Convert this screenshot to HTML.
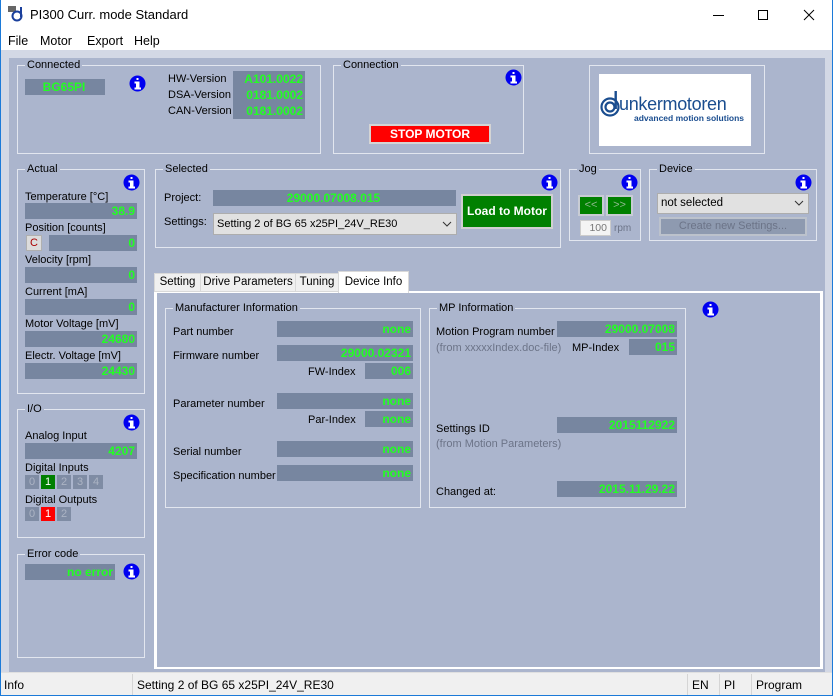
<!DOCTYPE html>
<html><head><meta charset="utf-8">
<style>
*{margin:0;padding:0;box-sizing:border-box}
body{width:833px;height:696px;overflow:hidden;background:#fff;font-family:"Liberation Sans",sans-serif;font-size:11px;color:#000;position:relative}
.a{position:absolute}
.lbl{position:absolute;font-size:11px;white-space:nowrap;line-height:14px}
.grp{position:absolute;border:1px solid #e2e6ef}
.gt{position:absolute;top:-8px;left:7px;background:#abb5cd;padding:0 2px;font-size:11px;line-height:14px;white-space:nowrap}
.f{position:absolute;background:#7786a0;color:#22ff22;font-weight:bold;font-size:12px;text-align:right;padding-right:2px;line-height:16px;white-space:nowrap;overflow:hidden}
.ic{position:absolute;width:17px;height:17px}
.box{position:absolute;width:14px;height:14px;background:#7f8ca4;color:#acb4c4;font-size:11px;text-align:center;line-height:14px}
.tab{position:absolute;top:273px;height:19px;background:#f0f0f0;border:1px solid #d9d9d9;font-size:11.5px;line-height:17px;text-align:center}
.gray{color:#6c7488}
</style></head><body>
<div class="a" style="left:0;top:0;width:1px;height:696px;background:#1c7ad8"></div>
<div class="a" style="left:832px;top:0;width:1px;height:696px;background:#1c7ad8"></div>
<svg class="a" style="left:8px;top:6px" width="16" height="16" viewBox="0 0 16 16"><rect x="0" y="0" width="8" height="6" fill="#666"/><circle cx="9" cy="10" r="4.5" fill="none" stroke="#1a3f9c" stroke-width="2"/><rect x="12" y="1" width="2" height="10" fill="#1a3f9c"/></svg>
<div class="lbl" style="left:30px;top:8px;font-size:13px">PI300 Curr. mode Standard</div>
<svg class="a" style="left:700px;top:0" width="133" height="30"><line x1="13" y1="15.5" x2="24" y2="15.5" stroke="#000"/><rect x="58.5" y="10.5" width="9" height="9" fill="none" stroke="#000"/><path d="M104 10 L114 20 M114 10 L104 20" stroke="#000"/></svg>
<div class="lbl" style="left:8px;top:34px;font-size:12.5px">File</div>
<div class="lbl" style="left:40px;top:34px;font-size:12.5px">Motor</div>
<div class="lbl" style="left:87px;top:34px;font-size:12.5px">Export</div>
<div class="lbl" style="left:134px;top:34px;font-size:12.5px">Help</div>
<div class="a" style="left:1px;top:50px;width:831px;height:622px;background:#d3d8e5"></div>
<div class="a" style="left:9px;top:58px;width:816px;height:614px;background:#abb5cd"></div>

<div class="grp" style="left:17px;top:65px;width:304px;height:89px"><div class="gt">Connected</div></div>
<div class="f" style="left:25px;top:79px;width:80px;text-align:center">BG65PI</div>
<svg class="ic" style="left:129px;top:75px" viewBox="0 0 17 17"><circle cx="8.5" cy="8.5" r="8" fill="#0000f0"/><rect x="7.5" y="3" width="2" height="2" fill="#fff"/><path d="M5.5 6.5h5v6h1.5v2h-6.5v-2h1.5v-4h-1.5z" fill="#fff"/></svg>
<div class="lbl" style="left:168px;top:72px">HW-Version</div>
<div class="lbl" style="left:168px;top:88px">DSA-Version</div>
<div class="lbl" style="left:168px;top:104px">CAN-Version</div>
<div class="f" style="left:233px;top:71px;width:72px">A101.0022</div>
<div class="f" style="left:233px;top:87px;width:72px">0181.0002</div>
<div class="f" style="left:233px;top:103px;width:72px">0181.0002</div>

<div class="grp" style="left:333px;top:65px;width:191px;height:89px"><div class="gt">Connection</div></div>
<svg class="ic" style="left:505px;top:69px" viewBox="0 0 17 17"><circle cx="8.5" cy="8.5" r="8" fill="#0000f0"/><rect x="7.5" y="3" width="2" height="2" fill="#fff"/><path d="M5.5 6.5h5v6h1.5v2h-6.5v-2h1.5v-4h-1.5z" fill="#fff"/></svg>
<div class="a" style="left:369px;top:124px;width:122px;height:20px;border:2px solid #d4d4d4;background:#ff0000;color:#fff;font-weight:bold;font-size:12px;text-align:center;line-height:16px">STOP MOTOR</div>

<div class="grp" style="left:589px;top:65px;width:176px;height:89px"></div>
<div class="a" style="left:599px;top:74px;width:152px;height:72px;background:#fff"></div>
<svg class="a" style="left:600px;top:90px" width="22" height="30" viewBox="0 0 22 30"><circle cx="10" cy="17" r="8.5" fill="none" stroke="#1a4d8f" stroke-width="2.2"/><circle cx="10" cy="17" r="4.5" fill="none" stroke="#1a4d8f" stroke-width="2.2"/><rect x="14.5" y="1" width="2.4" height="18" fill="#1a4d8f"/></svg>
<div class="lbl" style="left:619px;top:94px;font-size:18px;line-height:20px;color:#1a4d8f;letter-spacing:-0.3px">unkermotoren</div>
<div class="lbl" style="left:634px;top:113px;font-size:8.5px;line-height:10px;font-weight:bold;color:#1a4d8f">advanced motion solutions</div>

<div class="grp" style="left:17px;top:169px;width:128px;height:225px"><div class="gt">Actual</div></div>
<svg class="ic" style="left:123px;top:174px" viewBox="0 0 17 17"><circle cx="8.5" cy="8.5" r="8" fill="#0000f0"/><rect x="7.5" y="3" width="2" height="2" fill="#fff"/><path d="M5.5 6.5h5v6h1.5v2h-6.5v-2h1.5v-4h-1.5z" fill="#fff"/></svg>
<div class="lbl" style="left:25px;top:190px">Temperature [°C]</div>
<div class="f" style="left:25px;top:203px;width:112px">38.9</div>
<div class="lbl" style="left:25px;top:221px">Position [counts]</div>
<div class="a" style="left:26px;top:235px;width:16px;height:16px;background:#dcdcdc;border:1px solid #b0b0b0;color:#a00;text-align:center;font-size:11px;line-height:14px">C</div>
<div class="f" style="left:49px;top:235px;width:88px">0</div>
<div class="lbl" style="left:25px;top:253px">Velocity [rpm]</div>
<div class="f" style="left:25px;top:267px;width:112px">0</div>
<div class="lbl" style="left:25px;top:285px">Current [mA]</div>
<div class="f" style="left:25px;top:299px;width:112px">0</div>
<div class="lbl" style="left:25px;top:317px">Motor Voltage [mV]</div>
<div class="f" style="left:25px;top:331px;width:112px">24680</div>
<div class="lbl" style="left:25px;top:349px">Electr. Voltage [mV]</div>
<div class="f" style="left:25px;top:363px;width:112px">24430</div>

<div class="grp" style="left:17px;top:409px;width:128px;height:129px"><div class="gt">I/O</div></div>
<svg class="ic" style="left:123px;top:414px" viewBox="0 0 17 17"><circle cx="8.5" cy="8.5" r="8" fill="#0000f0"/><rect x="7.5" y="3" width="2" height="2" fill="#fff"/><path d="M5.5 6.5h5v6h1.5v2h-6.5v-2h1.5v-4h-1.5z" fill="#fff"/></svg>
<div class="lbl" style="left:25px;top:429px">Analog Input</div>
<div class="f" style="left:25px;top:443px;width:112px">4207</div>
<div class="lbl" style="left:25px;top:461px">Digital Inputs</div>
<div class="box" style="left:25px;top:475px">0</div>
<div class="box" style="left:41px;top:475px;background:#007f00;color:#fff">1</div>
<div class="box" style="left:57px;top:475px">2</div>
<div class="box" style="left:73px;top:475px">3</div>
<div class="box" style="left:89px;top:475px">4</div>
<div class="lbl" style="left:25px;top:493px">Digital Outputs</div>
<div class="box" style="left:25px;top:507px">0</div>
<div class="box" style="left:41px;top:507px;background:#ff0000;color:#fff">1</div>
<div class="box" style="left:57px;top:507px">2</div>

<div class="grp" style="left:17px;top:554px;width:128px;height:104px"><div class="gt">Error code</div></div>
<div class="f" style="left:25px;top:564px;width:90px">no error</div>
<svg class="ic" style="left:123px;top:563px" viewBox="0 0 17 17"><circle cx="8.5" cy="8.5" r="8" fill="#0000f0"/><rect x="7.5" y="3" width="2" height="2" fill="#fff"/><path d="M5.5 6.5h5v6h1.5v2h-6.5v-2h1.5v-4h-1.5z" fill="#fff"/></svg>

<div class="grp" style="left:155px;top:169px;width:406px;height:79px"><div class="gt">Selected</div></div>
<svg class="ic" style="left:541px;top:174px" viewBox="0 0 17 17"><circle cx="8.5" cy="8.5" r="8" fill="#0000f0"/><rect x="7.5" y="3" width="2" height="2" fill="#fff"/><path d="M5.5 6.5h5v6h1.5v2h-6.5v-2h1.5v-4h-1.5z" fill="#fff"/></svg>
<div class="lbl" style="left:164px;top:191px">Project:</div>
<div class="f" style="left:213px;top:190px;width:243px;text-align:center">29000.07008.015</div>
<div class="lbl" style="left:164px;top:215px">Settings:</div>
<div class="a" style="left:213px;top:213px;width:244px;height:22px;background:#e1e1e1;border:1px solid #adadad;font-size:11px;line-height:20px;padding-left:3px">Setting 2 of BG 65 x25PI_24V_RE30</div>
<svg class="a" style="left:442px;top:220px" width="10" height="8"><path d="M1 2 L5 6 L9 2" fill="none" stroke="#333"/></svg>
<div class="a" style="left:461px;top:194px;width:92px;height:35px;border:2px solid #d0d0d0;background:#008000;color:#fff;font-weight:bold;font-size:12px;text-align:center;line-height:31px">Load to Motor</div>

<div class="grp" style="left:569px;top:169px;width:72px;height:72px"><div class="gt">Jog</div></div>
<svg class="ic" style="left:621px;top:174px" viewBox="0 0 17 17"><circle cx="8.5" cy="8.5" r="8" fill="#0000f0"/><rect x="7.5" y="3" width="2" height="2" fill="#fff"/><path d="M5.5 6.5h5v6h1.5v2h-6.5v-2h1.5v-4h-1.5z" fill="#fff"/></svg>
<div class="a" style="left:578px;top:195px;width:26px;height:21px;border:2px solid #c8ccd4;background:#008000;color:#8fb88f;text-align:center;line-height:17px;font-size:11px">&lt;&lt;</div>
<div class="a" style="left:606px;top:195px;width:27px;height:21px;border:2px solid #c8ccd4;background:#008000;color:#8fb88f;text-align:center;line-height:17px;font-size:11px">&gt;&gt;</div>
<div class="a" style="left:580px;top:220px;width:31px;height:16px;background:#f4f4f4;border:1px solid #ccc;color:#777;font-size:10.5px;text-align:right;padding-right:3px;line-height:14px">100</div>
<div class="lbl gray" style="left:614px;top:222px;font-size:10px">rpm</div>

<div class="grp" style="left:649px;top:169px;width:168px;height:72px"><div class="gt">Device</div></div>
<svg class="ic" style="left:795px;top:174px" viewBox="0 0 17 17"><circle cx="8.5" cy="8.5" r="8" fill="#0000f0"/><rect x="7.5" y="3" width="2" height="2" fill="#fff"/><path d="M5.5 6.5h5v6h1.5v2h-6.5v-2h1.5v-4h-1.5z" fill="#fff"/></svg>
<div class="a" style="left:657px;top:193px;width:152px;height:21px;background:#e1e1e1;border:1px solid #adadad;font-size:11.5px;line-height:19px;padding-left:3px">not selected</div>
<svg class="a" style="left:794px;top:199px" width="10" height="8"><path d="M1 2 L5 6 L9 2" fill="none" stroke="#333"/></svg>
<div class="a" style="left:659px;top:217px;width:148px;height:19px;background:#8e9ab0;border:2px solid #bcc2cc;color:#6c7488;font-size:11px;text-align:center;line-height:15px">Create new Settings...</div>

<div class="a" style="left:154px;top:291px;width:669px;height:378px;background:#fff"></div>
<div class="a" style="left:157px;top:293px;width:663px;height:374px;background:#abb5cd"></div>
<div class="tab" style="left:154px;width:47px">Setting</div>
<div class="tab" style="left:200px;width:96px">Drive Parameters</div>
<div class="tab" style="left:295px;width:44px">Tuning</div>
<div class="a" style="left:338px;top:271px;width:71px;height:22px;background:#fff;border:1px solid #d9d9d9;border-bottom:none;font-size:11.5px;line-height:20px;text-align:center">Device Info</div>

<div class="grp" style="left:165px;top:308px;width:256px;height:200px"><div class="gt">Manufacturer Information</div></div>
<div class="lbl" style="left:173px;top:325px">Part number</div>
<div class="f" style="left:277px;top:321px;width:136px">none</div>
<div class="lbl" style="left:173px;top:349px">Firmware number</div>
<div class="f" style="left:277px;top:345px;width:136px">29000.02321</div>
<div class="lbl" style="left:308px;top:365px">FW-Index</div>
<div class="f" style="left:365px;top:363px;width:48px">006</div>
<div class="lbl" style="left:173px;top:397px">Parameter number</div>
<div class="f" style="left:277px;top:393px;width:136px">none</div>
<div class="lbl" style="left:308px;top:413px">Par-Index</div>
<div class="f" style="left:365px;top:411px;width:48px">none</div>
<div class="lbl" style="left:173px;top:445px">Serial number</div>
<div class="f" style="left:277px;top:441px;width:136px">none</div>
<div class="lbl" style="left:173px;top:469px">Specification number</div>
<div class="f" style="left:277px;top:465px;width:136px">none</div>

<div class="grp" style="left:429px;top:308px;width:257px;height:200px"><div class="gt">MP Information</div></div>
<div class="lbl" style="left:436px;top:325px">Motion Program number</div>
<div class="f" style="left:557px;top:321px;width:120px">29000.07008</div>
<div class="lbl gray" style="left:436px;top:341px">(from xxxxxIndex.doc-file)</div>
<div class="lbl" style="left:572px;top:341px">MP-Index</div>
<div class="f" style="left:629px;top:339px;width:48px">015</div>
<div class="lbl" style="left:436px;top:422px">Settings ID</div>
<div class="f" style="left:557px;top:417px;width:120px">2015112922</div>
<div class="lbl gray" style="left:436px;top:437px">(from Motion Parameters)</div>
<div class="lbl" style="left:436px;top:485px">Changed at:</div>
<div class="f" style="left:557px;top:481px;width:120px">2015.11.29.22</div>
<svg class="ic" style="left:702px;top:301px" viewBox="0 0 17 17"><circle cx="8.5" cy="8.5" r="8" fill="#0000f0"/><rect x="7.5" y="3" width="2" height="2" fill="#fff"/><path d="M5.5 6.5h5v6h1.5v2h-6.5v-2h1.5v-4h-1.5z" fill="#fff"/></svg>

<div class="a" style="left:1px;top:672px;width:831px;height:23px;background:#f0f0f0;border-top:1px solid #e0e0e0"></div>
<div class="a" style="left:1px;top:695px;width:831px;height:1px;background:#1c7ad8"></div>
<div class="lbl" style="left:4px;top:678px;font-size:12px">Info</div>
<div class="a" style="left:132px;top:674px;width:1px;height:21px;background:#d5d5d5"></div>
<div class="lbl" style="left:137px;top:678px;font-size:12px">Setting 2 of BG 65 x25PI_24V_RE30</div>
<div class="a" style="left:687px;top:674px;width:1px;height:21px;background:#d5d5d5"></div>
<div class="lbl" style="left:692px;top:678px;font-size:12px">EN</div>
<div class="a" style="left:719px;top:674px;width:1px;height:21px;background:#d5d5d5"></div>
<div class="lbl" style="left:724px;top:678px;font-size:12px">PI</div>
<div class="a" style="left:751px;top:674px;width:1px;height:21px;background:#d5d5d5"></div>
<div class="lbl" style="left:756px;top:678px;font-size:12px">Program</div>
</body></html>
